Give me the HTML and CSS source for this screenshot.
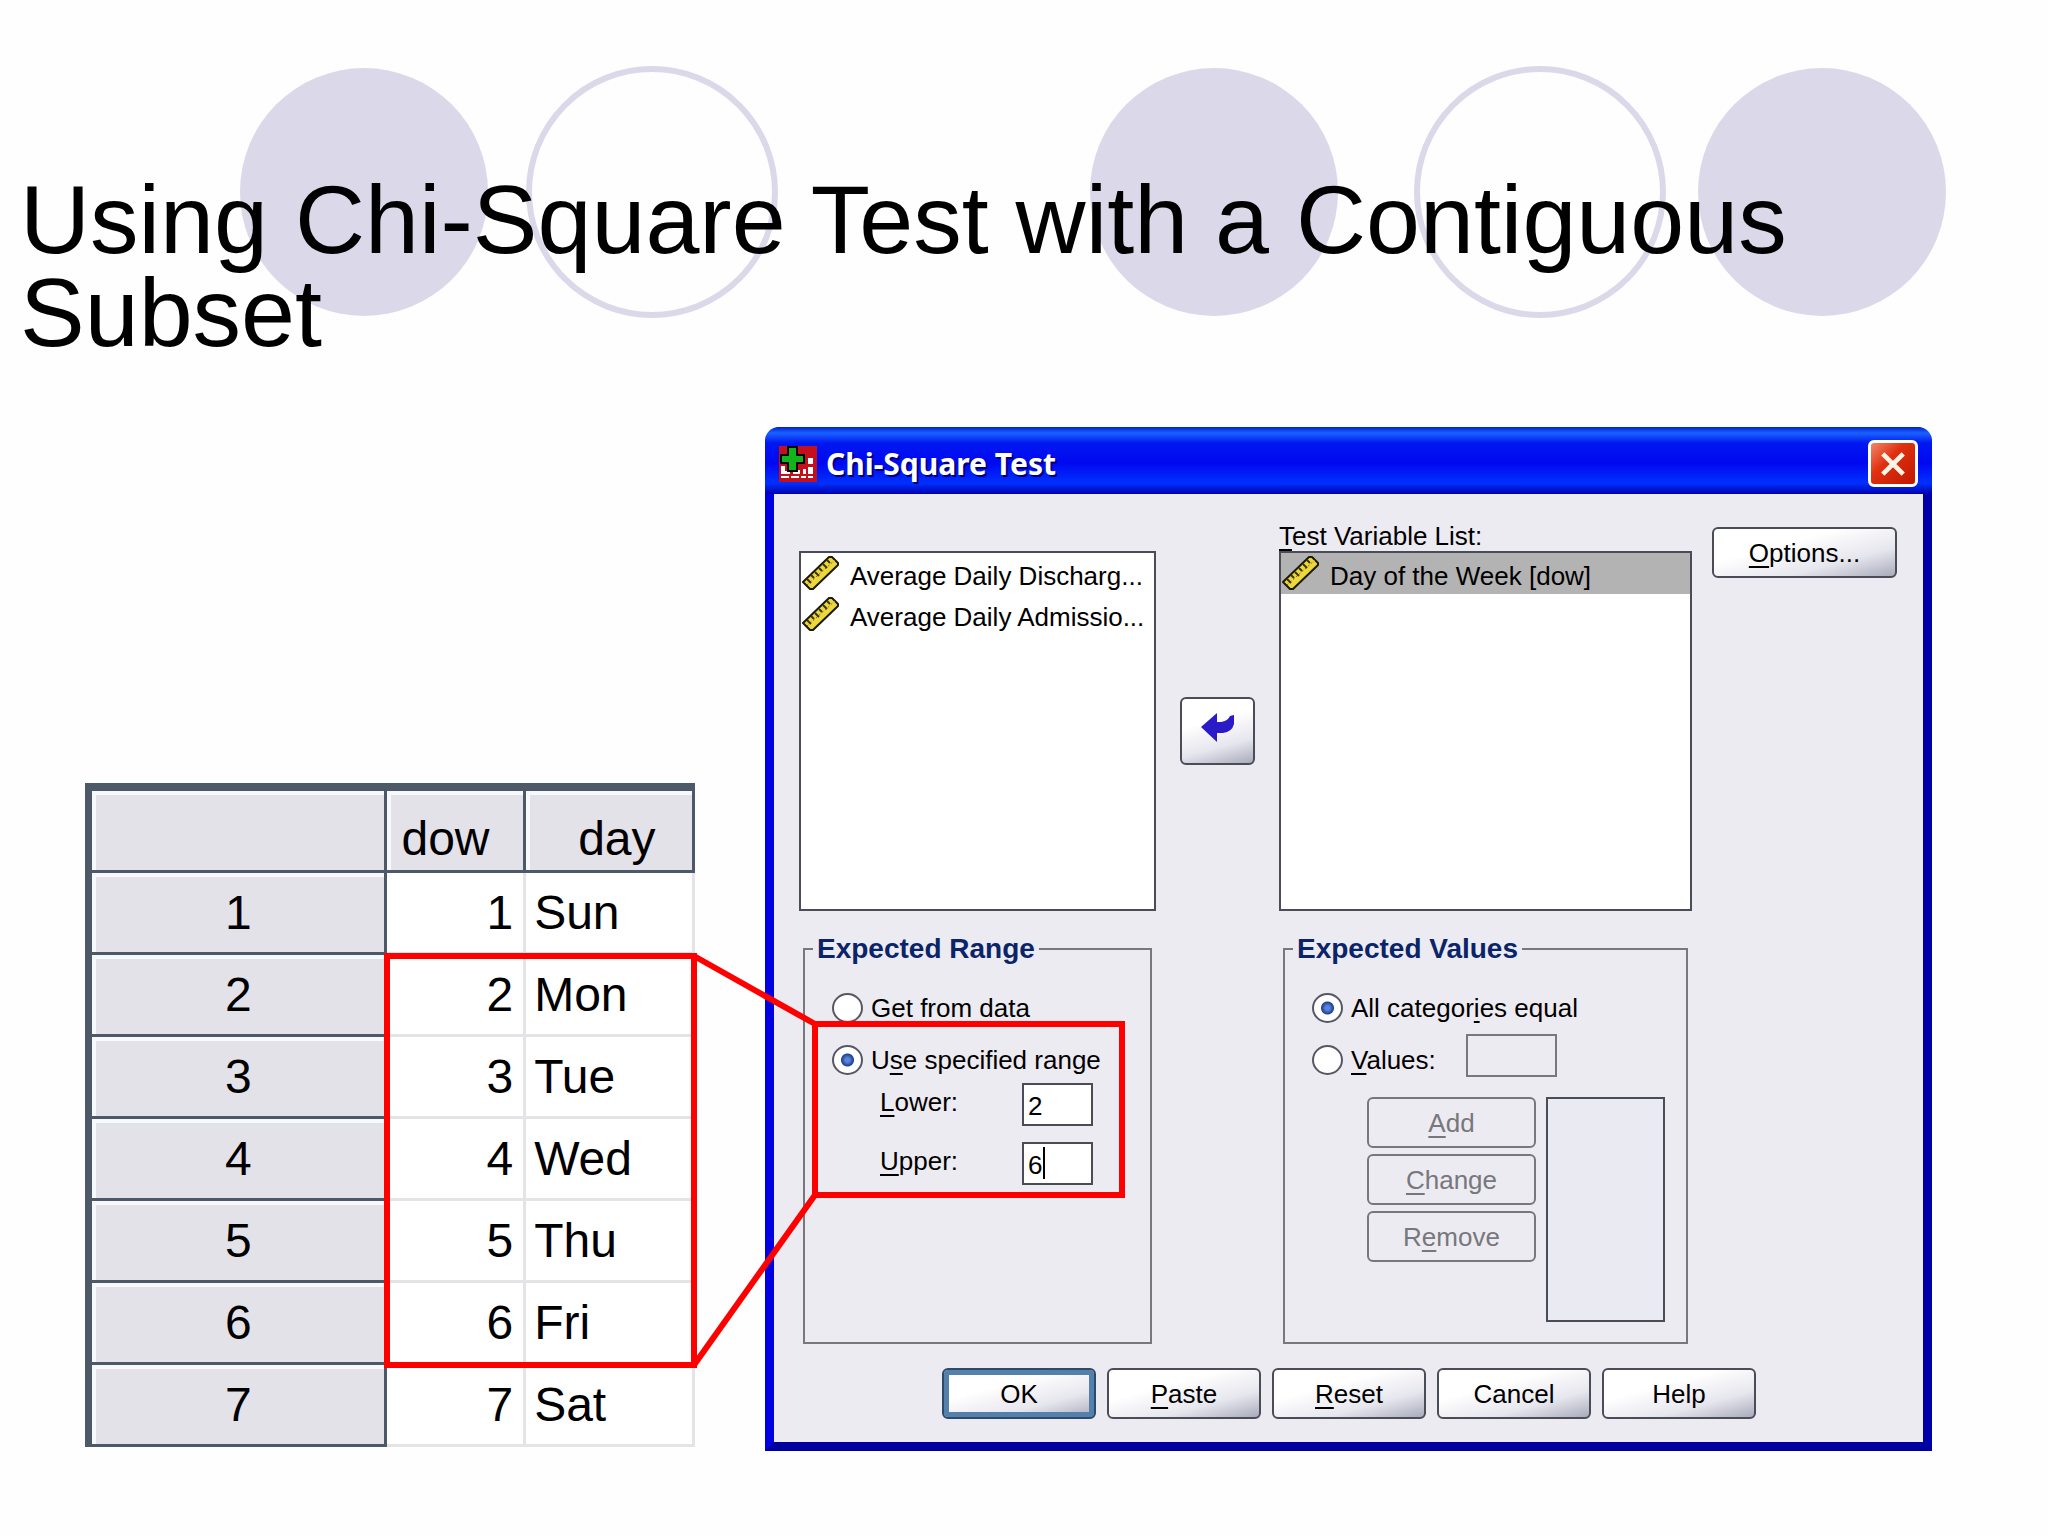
FILE: index.html
```html
<!DOCTYPE html>
<html lang="en">
<head>
  <meta charset="UTF-8">
  <meta name="viewport" content="width=device-width, initial-scale=1.0">
  <title>Using Chi-Square Test with a Contiguous Subset</title>
  <link rel="stylesheet" href="styles.css">
</head>
<body>
  <svg class="symbols" aria-hidden="true">
    <symbol id="ruler" viewBox="0 0 38 34">
      <path d="M1 26 L27 1 L30 1 L36 7 L36 9 L11 33 L8 33 Z" fill="#ecd83c" stroke="#1c1a08" stroke-width="2" stroke-linejoin="round"/>
      <path d="M5 29 L33 4" stroke="#8a7714" stroke-width="1" stroke-dasharray="2 2"/>
      <path d="M5 23 l4 4 M9 19 l3 3 M13 16 l4 4 M17 12 l3 3 M21 8 l4 4 M25 4 l3 3" stroke="#3d3508" stroke-width="2"/>
    </symbol>
  </svg>

  <header class="slide-header">
    <svg class="circles" viewBox="0 0 2048 256" aria-hidden="true">
      <g fill="#dbd8ea">
        <circle cx="364" cy="127" r="124"/>
        <circle cx="1214" cy="127" r="124"/>
        <circle cx="1822" cy="127" r="124"/>
      </g>
      <g fill="none" stroke="#dbd8ea" stroke-width="6">
        <circle cx="652" cy="127" r="123"/>
        <circle cx="1540" cy="127" r="123"/>
      </g>
    </svg>
    <h1>Using Chi-Square Test with a Contiguous Subset</h1>
  </header>

  <main class="slide-body">
    <table class="data">
      <colgroup>
        <col class="col-num">
        <col class="col-dow">
        <col class="col-day">
      </colgroup>
      <thead>
        <tr><td class="corner"></td><th scope="col">dow</th><th scope="col" class="day">day</th></tr>
      </thead>
      <tbody>
        <tr><th scope="row">1</th><td>1</td><td>Sun</td></tr>
        <tr><th scope="row">2</th><td>2</td><td>Mon</td></tr>
        <tr><th scope="row">3</th><td>3</td><td>Tue</td></tr>
        <tr><th scope="row">4</th><td>4</td><td>Wed</td></tr>
        <tr><th scope="row">5</th><td>5</td><td>Thu</td></tr>
        <tr><th scope="row">6</th><td>6</td><td>Fri</td></tr>
        <tr><th scope="row">7</th><td>7</td><td>Sat</td></tr>
      </tbody>
    </table>

    <section class="dialog" aria-labelledby="dialog-title">
      <div class="titlebar">
        <svg class="app-icon" viewBox="0 0 38 36" aria-hidden="true">
          <rect width="38" height="36" fill="#c4101c"/>
          <g fill="#fff">
            <path d="M2 20h4v5h5v3H2z M14 24h7v4h-7z M24 23h3v5h-3z M29 12h5v6h-5z M29 21h5v7h-5z"/>
            <path d="M2 30h8v2H2z M12 30h8v2h-8z M22 30h5v2h-5z M29 30h5v2h-5z"/>
          </g>
          <path d="M9 1h9v8h7v8h-7v8H9v-8H2V9h7z" fill="#12b41c" stroke="#000" stroke-width="2"/>
        </svg>
        <h2 id="dialog-title">Chi-Square Test</h2>
        <button type="button" class="close" aria-label="Close">
          <svg viewBox="0 0 28 28" aria-hidden="true"><path d="M3 3 L25 25 M25 3 L3 25" stroke="#fff4e8" stroke-width="5"/></svg>
        </button>
      </div>

      <form class="dialog-body">
        <div class="pane source">
          <ul class="listbox" role="listbox" aria-label="Variables">
            <li role="option"><svg class="ruler"><use href="#ruler"/></svg>Average Daily Discharg...</li>
            <li role="option"><svg class="ruler"><use href="#ruler"/></svg>Average Daily Admissio...</li>
          </ul>
        </div>

        <button type="button" class="btn move" aria-label="Move variable">
          <svg viewBox="0 0 34 30" aria-hidden="true"><path d="M0 14 L16 0 V9 H20 Q27 8 29 3 L33 2 V11 Q31 19 22 20 H16 V29 Z" fill="#2a1ac8"/></svg>
        </button>

        <div class="pane">
          <span class="list-label" id="test-list"><u>T</u>est Variable List:</span>
          <ul class="listbox" role="listbox" aria-labelledby="test-list">
            <li role="option" aria-selected="true" class="selected"><svg class="ruler"><use href="#ruler"/></svg>Day of the Week [dow]</li>
          </ul>
        </div>

        <button type="button" class="btn options"><u>O</u>ptions...</button>

        <fieldset class="group range">
          <legend>Expected Range</legend>
          <label class="choice"><input type="radio" name="range"><span><u>G</u>et from data</span></label>
          <label class="choice"><input type="radio" name="range" checked><span>U<u>s</u>e specified range</span></label>
          <div class="bounds">
            <label for="lower"><u>L</u>ower:</label>
            <input type="text" id="lower" value="2">
            <label for="upper"><u>U</u>pper:</label>
            <div class="editing">
              <input type="text" id="upper" value="6">
              <span class="caret"></span>
            </div>
          </div>
        </fieldset>

        <fieldset class="group values">
          <legend>Expected Values</legend>
          <label class="choice"><input type="radio" name="values" checked><span>All categor<u>i</u>es equal</span></label>
          <div class="value-row">
            <label class="choice"><input type="radio" name="values"><span><u>V</u>alues:</span></label>
            <input type="text" class="value-input" aria-label="Value" disabled>
          </div>
          <div class="value-edit">
            <div class="value-buttons">
              <button type="button" class="btn" disabled><u>A</u>dd</button>
              <button type="button" class="btn" disabled><u>C</u>hange</button>
              <button type="button" class="btn" disabled>R<u>e</u>move</button>
            </div>
            <div class="value-list"></div>
          </div>
        </fieldset>

        <div class="actions">
          <button type="submit" class="btn default">OK</button>
          <button type="button" class="btn"><u>P</u>aste</button>
          <button type="reset" class="btn"><u>R</u>eset</button>
          <button type="button" class="btn">Cancel</button>
          <button type="button" class="btn">Help</button>
        </div>
      </form>
    </section>

    <!-- callout from the table rows to the range fields -->
    <svg class="callout" viewBox="0 0 1847 1024" preserveAspectRatio="none" aria-hidden="true">
      <rect x="302" y="529" width="307" height="409"/>
      <rect x="730" y="597" width="307" height="171"/>
      <path d="M609 529 L730 597 M609 938 L730 768"/>
    </svg>
  </main>
</body>
</html>
```

FILE: styles.css
```css
:root {
  --face: #ecebf1;
  --line: #4a4d58;
  --grid: #4d5868;
  --frame: #0000c8;
  --red: #ff0000;
}

* {
  box-sizing: border-box;
}

body {
  margin: 0;
  background: #fefefe;
  color: #000;
  font-family: "Liberation Sans", Arial, sans-serif;
  font-size: 26px;
  line-height: 30px;
}

h1, h2, ul {
  margin: 0;
  padding: 0;
}

u {
  text-underline-offset: 4px;
  text-decoration-thickness: 2px;
  text-decoration-skip-ink: none;
}

.symbols {
  display: none;
}

/* header */

.slide-header {
  display: grid;
  padding-top: 65px;
}

.circles,
.slide-header h1 {
  grid-area: 1 / 1;
}

.circles {
  width: 100%;
}

.slide-header h1 {
  padding: 108px 200px 0 20px;
  font-size: 97px;
  font-weight: 400;
  line-height: 93px;
}

.slide-body {
  position: relative;
  display: grid;
  grid-template-columns: 610fr 1167fr;
  gap: 70px;
  align-items: end;
  margin: 68px 116px 80px 85px;
}

/* data table */

.data {
  width: 100%;
  margin-bottom: 4px;
  table-layout: fixed;
  border-collapse: separate;
  border-spacing: 0;
  border-top: 8px solid var(--grid);
  border-left: 7px solid var(--grid);
  font-size: 48px;
  line-height: 52px;
}

.col-num {
  width: 49%;
}

.col-dow {
  width: 23%;
}

.data tr {
  height: 82px;
}

.data th,
.data td {
  padding: 0 8px;
  font-weight: 400;
}

.data th,
.data .corner {
  background: #e3e2e9;
  border-right: 3px solid var(--grid);
  border-bottom: 3px solid var(--grid);
  box-shadow: inset 4px 4px #f6faff;
}

.data thead th {
  padding: 16px 14px 0;
  text-align: left;
}

.data thead .day {
  padding-left: 52px;
}

.data tbody td {
  background: #fff;
  border-right: 3px solid #e4e4e6;
  border-bottom: 3px solid #e4e4e6;
}

.data tbody td:nth-child(2) {
  padding-right: 10px;
  text-align: right;
}

/* dialog */

.dialog {
  border: 9px solid var(--frame);
  border-color: var(--frame) #0000a8 #0000a0 #0000e0;
  border-top: 0;
  border-radius: 16px 16px 0 0;
  background: var(--face);
}

.titlebar {
  display: flex;
  align-items: center;
  gap: 9px;
  height: 67px;
  margin: 0 -9px;
  padding: 6px 14px 0;
  border-radius: 14px 14px 0 0;
  background: linear-gradient(#0020d0, #1a62ff 6px, #0018f0 16px, #0008f0 36px, #0030ff 56px, #0000b0);
}

.app-icon {
  width: 38px;
  height: 36px;
}

.titlebar h2 {
  flex: 1;
  color: #fff;
  font-family: "Noto Sans", sans-serif;
  font-size: 30px;
  font-weight: 700;
  line-height: 36px;
  text-shadow: 2px 2px #000078;
}

.close {
  display: grid;
  place-items: center;
  width: 50px;
  height: 47px;
  padding: 0;
  border: 3px solid #fff;
  border-radius: 6px;
  background: linear-gradient(135deg, #f08868, #e03010 40%, #c01800);
}

.close svg {
  width: 28px;
  height: 26px;
}

.dialog-body {
  display: grid;
  grid-template-columns: 357fr 75fr 413fr 185fr;
  column-gap: 24px;
  row-gap: 22px;
  padding: 27px 22px 23px 25px;
}

.pane {
  display: flex;
  flex-direction: column;
}

.source {
  padding-top: 30px;
}

.listbox {
  height: 360px;
  border: 2px solid var(--line);
  background: #fff;
  list-style: none;
}

.listbox li {
  display: flex;
  align-items: center;
  gap: 10px;
  height: 41px;
  padding: 4px 0 0 1px;
  white-space: nowrap;
}

.listbox .selected {
  background: #b3b3b3;
}

.ruler {
  width: 38px;
  height: 34px;
  margin-bottom: 6px;
}

.btn {
  height: 51px;
  padding: 0;
  border: 2px solid var(--line);
  border-radius: 6px;
  background: linear-gradient(165deg, #fff 35%, #e6e6ee 70%, #a9abbb);
  color: #000;
  font: inherit;
}

.btn:disabled {
  border-color: #77777c;
  background: var(--face);
  color: #77777c;
}

.move {
  align-self: center;
  height: 68px;
  margin-top: 30px;
}

.move svg {
  width: 34px;
  height: 30px;
}

.options {
  margin: 6px 4px 0 -4px;
}

/* group boxes */

.group {
  min-width: 0;
  height: 411px;
  margin: 0 4px;
  padding: 23px 20px 0 27px;
  border: 2px solid #77777c;
}

.group legend {
  margin-left: -19px;
  padding: 0 4px;
  color: #0a246a;
  font-size: 28px;
  font-weight: 700;
  line-height: 32px;
}

.range {
  grid-column: 1;
}

.values {
  grid-column: 3;
}

.choice {
  display: flex;
  align-items: center;
  gap: 8px;
  height: 40px;
  margin-bottom: 12px;
  white-space: nowrap;
}

.choice input {
  appearance: none;
  flex: none;
  width: 31px;
  height: 30px;
  margin: 0;
  border: 2px solid #555862;
  border-radius: 50%;
  background: #fff;
}

.choice input:checked {
  background: radial-gradient(circle at center, #5b86d8 2px, #1c3f96 6px, #fff 7px);
}

input[type="text"] {
  padding: 4px 4px 0;
  border: 2px solid var(--line);
  border-radius: 0;
  background: #fff;
  font: inherit;
}

.bounds {
  display: grid;
  grid-template-columns: 142px 71px;
  row-gap: 16px;
  margin: -9px 0 0 48px;
}

.bounds input {
  display: block;
  width: 71px;
  height: 43px;
}

.bounds label {
  padding-top: 4px;
}

.editing {
  position: relative;
}

.caret {
  position: absolute;
  top: 5px;
  left: 21px;
  width: 2px;
  height: 32px;
  background: #000;
}

.value-row {
  display: grid;
  grid-template-columns: 154px 91px;
  height: 40px;
}

.value-input {
  height: 43px;
  margin-top: -6px;
}

input.value-input:disabled {
  border-color: #77777c;
  background: var(--face);
}

.value-edit {
  display: grid;
  grid-template-columns: 169px 119px;
  gap: 10px;
  margin: 17px 0 0 55px;
}

.value-buttons {
  display: grid;
  align-content: start;
  gap: 6px;
}

.value-list {
  height: 225px;
  border: 2px solid var(--line);
  background: #eaebf2;
}

.actions {
  grid-column: 1 / -1;
  display: flex;
  gap: 11px;
  margin: 2px 0 0 143px;
}

.actions .btn {
  width: 154px;
}

.actions .default {
  border-color: #2c4a6c;
  box-shadow: inset 0 0 0 5px #5580ac;
}

/* red callout */

.callout {
  position: absolute;
  inset: 0;
  width: 100%;
  height: 100%;
  fill: none;
  stroke: var(--red);
  stroke-width: 6px;
  pointer-events: none;
}
```
